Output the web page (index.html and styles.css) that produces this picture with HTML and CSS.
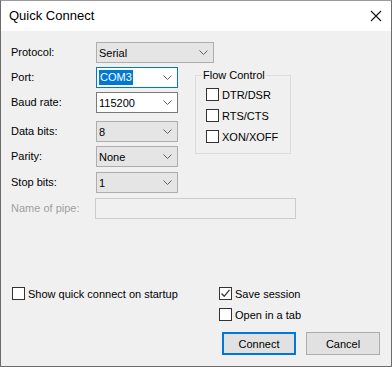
FILE: index.html
```html
<!DOCTYPE html>
<html lang="en">

<head>
    <meta charset="UTF-8" />
    <title>Quick Connect</title>
    <link rel="stylesheet" href="styles.css">
</head>

<body>
    <div class="dialog">
        <div class="titlebar">
            <span class="title">Quick Connect</span>
            <svg class="close" width="12" height="12" viewBox="0 0 12 12">
                <path d="M1 1 L11 11 M11 1 L1 11" stroke="#111" stroke-width="1.1" fill="none" />
            </svg>
        </div>

        <div class="content">
            <div class="form">
                <span class="lbl">Protocol:</span>
                <div class="combo flat wide">Serial
                    <svg class="chev" width="9" height="5" viewBox="0 0 9 5"><path d="M0.5 0.5 L4.5 4.5 L8.5 0.5" /></svg>
                </div>

                <span class="lbl">Port:</span>
                <div class="combo edit focus"><span class="sel">COM3</span>
                    <svg class="chev" width="9" height="5" viewBox="0 0 9 5"><path d="M0.5 0.5 L4.5 4.5 L8.5 0.5" /></svg>
                </div>

                <fieldset class="group">
                    <legend>Flow Control</legend>
                    <label class="check"><span class="box"></span>DTR/DSR</label>
                    <label class="check"><span class="box"></span>RTS/CTS</label>
                    <label class="check"><span class="box"></span>XON/XOFF</label>
                </fieldset>

                <span class="lbl">Baud rate:</span>
                <div class="combo edit">115200
                    <svg class="chev" width="9" height="5" viewBox="0 0 9 5"><path d="M0.5 0.5 L4.5 4.5 L8.5 0.5" /></svg>
                </div>

                <span class="lbl">Data bits:</span>
                <div class="combo flat">8
                    <svg class="chev" width="9" height="5" viewBox="0 0 9 5"><path d="M0.5 0.5 L4.5 4.5 L8.5 0.5" /></svg>
                </div>

                <span class="lbl">Parity:</span>
                <div class="combo flat">None
                    <svg class="chev" width="9" height="5" viewBox="0 0 9 5"><path d="M0.5 0.5 L4.5 4.5 L8.5 0.5" /></svg>
                </div>

                <span class="lbl">Stop bits:</span>
                <div class="combo flat">1
                    <svg class="chev" width="9" height="5" viewBox="0 0 9 5"><path d="M0.5 0.5 L4.5 4.5 L8.5 0.5" /></svg>
                </div>

                <span class="lbl disabled">Name of pipe:</span>
                <div class="textbox"></div>
            </div>

            <div class="footer">
                <div class="options">
                    <label class="check"><span class="box"></span>Show quick connect on startup</label>
                    <label class="check"><span class="box checked">
                        <svg width="11" height="11" viewBox="0 0 11 11"><path d="M1.5 5.5 L4.2 8.3 L9.5 1.8" /></svg>
                    </span>Save session</label>
                    <span></span>
                    <label class="check"><span class="box"></span>Open in a tab</label>
                </div>
                <div class="buttons">
                    <button class="btn default">Connect</button>
                    <button class="btn">Cancel</button>
                </div>
            </div>
        </div>
    </div>
</body>

</html>
```

FILE: styles.css
```css
* {
    box-sizing: border-box
}

body {
    margin: 0;
    font-family: "Liberation Sans", Arial, sans-serif;
    font-size: 11px;
    color: #000
}

.dialog {
    width: 392px;
    height: 367px;
    border: 1px solid #6b6b6b;
    border-top-color: #9a9a9a;
    background: #f0f0f0;
    display: flex;
    flex-direction: column
}

.titlebar {
    height: 30px;
    background: #fff;
    display: flex;
    align-items: center;
    justify-content: space-between;
    padding: 0 9px 0 8px
}

.title {
    font-size: 13px;
    margin-top: -1px
}

.close {
    display: block
}

.content {
    flex: 1;
    display: flex;
    flex-direction: column;
    padding: 11px 11px 11px 10px
}

.form {
    display: grid;
    grid-template-columns: 85px 82px 17px 96px;
    grid-template-rows: 25px 25px 29px 25px 26px 26px 21px;
    align-items: start
}

.lbl {
    grid-column: 1;
    line-height: 21px;
    white-space: nowrap
}

.lbl.disabled {
    color: #a0a0a0
}

.combo {
    grid-column: 2;
    height: 21px;
    display: flex;
    align-items: center;
    justify-content: space-between;
    padding: 0 5px 0 2px;
    border: 1px solid #adadad
}

.combo.wide {
    grid-column: 2 / span 3;
    width: 118px
}

.combo.flat {
    background: #e5e5e5;
    border-color: #adadad
}

.combo.edit {
    background: #fff;
    border-color: #7a7a7a
}

.combo.focus {
    border-color: #0078d7
}

.sel {
    background: #0078d7;
    color: #fff;
    padding: 0 1px;
    line-height: 15px
}

.chev path {
    fill: none;
    stroke: #606060;
    stroke-width: 1
}

.textbox {
    grid-column: 2 / span 3;
    width: 201px;
    height: 21px;
    margin-left: -1px;
    border: 1px solid #cccccc;
    background: #f0f0f0
}

.group {
    grid-column: 4;
    grid-row: 2 / span 4;
    margin: 1px 0 0;
    padding: 2px 0 0 10px;
    height: 86px;
    border: 1px solid #dcdcdc;
    display: flex;
    flex-direction: column
}

.group legend {
    padding: 0 1px;
    margin-left: -4px;
    line-height: 14px
}

.check {
    display: flex;
    align-items: center;
    height: 21px;
    white-space: nowrap
}

.box {
    width: 13px;
    height: 13px;
    border: 1px solid #333;
    background: #fff;
    margin-right: 3px;
    display: flex;
    align-items: center;
    justify-content: center;
    flex: none
}

.box path {
    fill: none;
    stroke: #333;
    stroke-width: 1.3
}

.footer {
    margin-top: auto
}

.options {
    display: grid;
    grid-template-columns: 207px 1fr;
    padding-left: 1px
}

.buttons {
    display: flex;
    justify-content: flex-end;
    gap: 10px;
    margin-top: 7px
}

.btn {
    width: 74px;
    height: 23px;
    font-family: inherit;
    font-size: 11px;
    color: #000;
    background: #e1e1e1;
    border: 1px solid #adadad;
    padding: 0
}

.btn.default {
    border: 2px solid #0078d7
}
```
